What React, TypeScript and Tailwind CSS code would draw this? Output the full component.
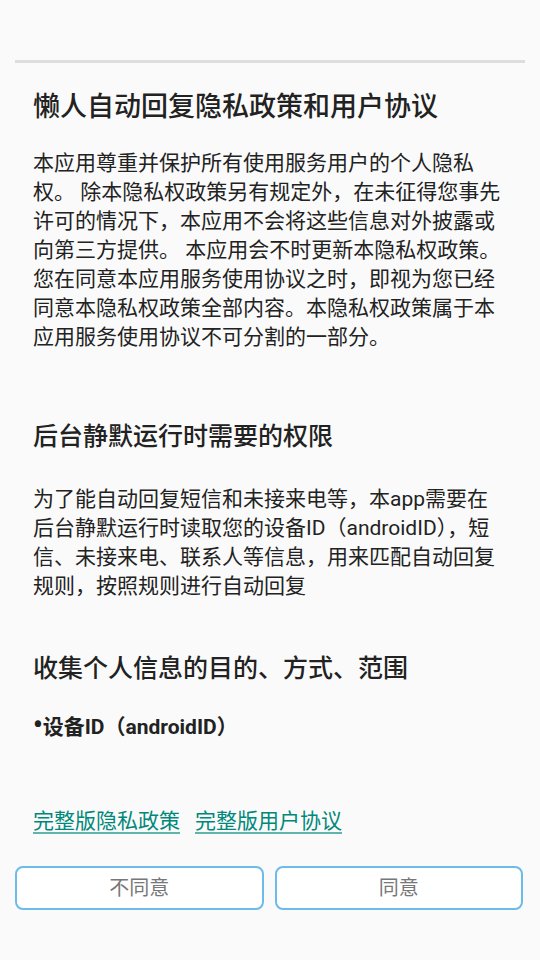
import React from 'react';

const font = { fontFamily: 'Roboto, "Noto Sans CJK SC", sans-serif' };

function Heading({ children, className = '' }: { children: React.ReactNode; className?: string }) {
  return <h2 className={`text-[25px] leading-[34px] font-medium text-[#222] ${className}`}>{children}</h2>;
}

function Para({ children, className = '' }: { children: React.ReactNode; className?: string }) {
  return <p className={`text-[21px] leading-[29px] text-[#222] ${className}`}>{children}</p>;
}

export default function App() {
  return (
    <div className="min-h-[960px] bg-[#fafafa] px-[15px] pt-[60px]" style={font}>
      <div className="h-[3px] bg-[#dedede]" />
      <div className="px-[18px]">
        <h1 className="mt-[26px] text-[27px] leading-[36px] font-medium text-[#222]">懒人自动回复隐私政策和用户协议</h1>
        <Para className="mt-[24px]">
          本应用尊重并保护所有使用服务用户的个人隐私权。 除本隐私权政策另有规定外，在未征得您事先许可的情况下，本应用不会将这些信息对外披露或向第三方提供。 本应用会不时更新本隐私权政策。您在同意本应用服务使用协议之时，即视为您已经同意本隐私权政策全部内容。本隐私权政策属于本应用服务使用协议不可分割的一部分。
        </Para>
        <Heading className="mt-[68px]">后台静默运行时需要的权限</Heading>
        <Para className="mt-[31px]">
          为了能自动回复短信和未接来电等，本app需要在后台静默运行时读取您的设备ID（androidID），短信、未接来电、联系人等信息，用来匹配自动回复规则，按照规则进行自动回复
        </Para>
        <Heading className="mt-[51px]">收集个人信息的目的、方式、范围</Heading>
        <Para className="mt-[27px] font-bold">
          <span className="text-[27px] leading-[0]">•</span>设备ID（androidID）
        </Para>
        <div className="mt-[65px] flex gap-[15px] text-[21px] leading-[29px]">
          <a className="text-[#00897b] underline underline-offset-[4px] decoration-[#5fb5aa]">完整版隐私政策</a>
          <a className="text-[#00897b] underline underline-offset-[4px] decoration-[#5fb5aa]">完整版用户协议</a>
        </div>
      </div>
      <div className="mt-[30px] mr-[2px] flex gap-[11px]">
        <button className="flex-1 h-[44px] rounded-[8px] border-2 border-[#6cbbe8] bg-white text-[20px] text-[#777]">不同意</button>
        <button className="flex-1 h-[44px] rounded-[8px] border-2 border-[#6cbbe8] bg-white text-[20px] text-[#777]">同意</button>
      </div>
    </div>
  );
}
